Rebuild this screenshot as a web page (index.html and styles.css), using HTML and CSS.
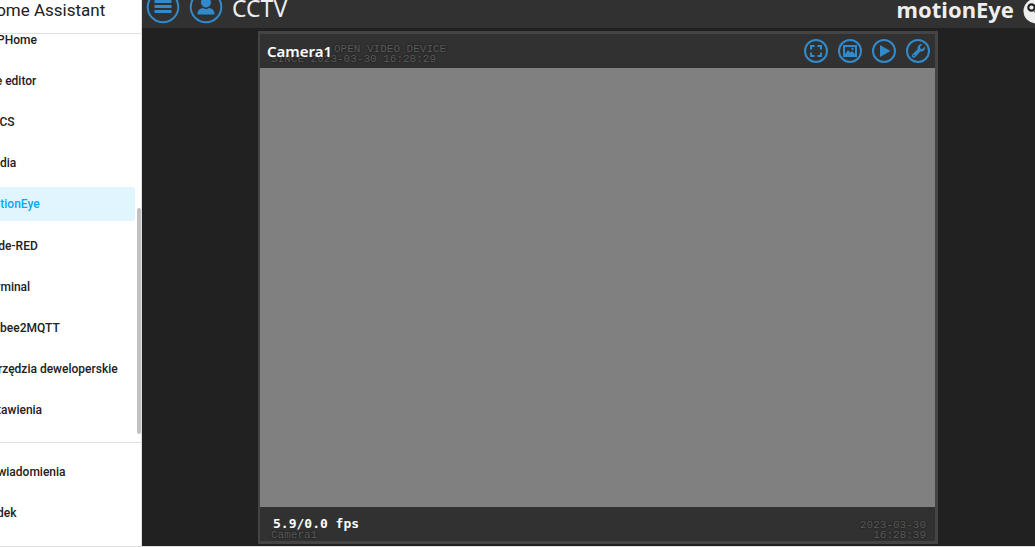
FILE: index.html
```
<!DOCTYPE html>
<html lang="pl">
<head>
    <meta charset="utf-8">
    <title>motionEye</title>
    <link rel="stylesheet" href="styles.css">
</head>
<body>

<nav class="sidebar">
    <div class="title">Home Assistant</div>
    <div class="menu">
        <a href="#">ESPHome</a>
        <a href="#">File editor</a>
        <a href="#">HACS</a>
        <a href="#">Media</a>
        <a href="#" class="active">MotionEye</a>
        <a href="#">Node-RED</a>
        <a href="#">Terminal</a>
        <a href="#">Zigbee2MQTT</a>
        <a href="#">Narzędzia deweloperskie</a>
        <a href="#">Ustawienia</a>
        <span class="scroll"></span>
    </div>
    <div class="bottom">
        <a href="#">Powiadomienia</a>
        <a href="#">Radek</a>
    </div>
</nav>

<main class="page">
    <header class="header">
        <button class="round" aria-label="Menu">
            <svg viewBox="0 0 34 34"><circle cx="17" cy="17" r="15.3"/><path class="fill" d="M8.500 10h17v3h-17zM8.500 15h17v3h-17zM8.500 20h17v3h-17z"/></svg>
        </button>
        <button class="round" aria-label="User">
            <svg viewBox="0 0 34 34"><circle cx="17" cy="17" r="15.3"/><path class="fill" d="M8.500 24.500c0-4 2-6 5.500-6.500q3 2 6 0c3.500.5 5.500 2.500 5.500 6.500z"/><circle class="fill" cx="17" cy="12.500" r="5"/></svg>
        </button>
        <span class="name">CCTV</span>
        <span class="logo">motionEye</span>
        <svg class="owl" viewBox="0 0 26 26"><circle cx="13" cy="13" r="12.500" fill="#eee"/><circle cx="8.500" cy="9.500" r="3.200" fill="#eee" stroke="#222" stroke-width="2.200"/><circle cx="18" cy="9.500" r="3.200" fill="#eee" stroke="#222" stroke-width="2.200"/><path d="M11 13l2 4 2-4z" fill="#222"/></svg>
    </header>

    <section class="camera">
        <div class="bar top">
            <div class="osd error"><span>OPEN VIDEO DEVICE</span>SINCE 2023-03-30 16:28:29</div>
            <h1>Camera1</h1>
            <div class="buttons">
                <button aria-label="Full screen"><svg viewBox="0 0 24 24"><circle cx="12" cy="12" r="11"/><path d="M7 10.500V7h3.500M13.500 7H17v3.500M17 13.500V17h-3.500M10.500 17H7v-3.500"/></svg></button>
                <button aria-label="Pictures"><svg viewBox="0 0 24 24"><circle cx="12" cy="12" r="11"/><path d="M6 7h12v10H6z"/><path class="fill" d="M7 15l3-4 2.500 2.500L14 12l3 3v1H7z"/><circle class="fill" cx="14.500" cy="9.800" r="1.200"/></svg></button>
                <button aria-label="Movies"><svg viewBox="0 0 24 24"><circle cx="12" cy="12" r="11"/><path class="fill" d="M8 6l10.500 6L8 18z"/></svg></button>
                <button aria-label="Settings"><svg viewBox="0 0 24 24"><circle cx="12" cy="12" r="11"/><path class="fill" fill-rule="evenodd" d="M16.500 5.200l-2.500 2.500.3 2 2 .3 2.500-2.500c.8 3-1.500 5.500-4.500 5l-5 5.500c-2 2-4.800-.8-2.800-2.800l5.200-5c-.7-3 1.800-5.700 4.800-5zM7.200 16.500a.8.8 0 1 0 1.600 0a.8.8 0 1 0-1.600 0z"/></svg></button>
            </div>
        </div>
        <div class="video"></div>
        <div class="bar foot">
            <div class="info">
                <div class="fps">5.9/0.0 fps</div>
                <div class="osd">Camera1</div>
            </div>
            <div class="osd date">2023-03-30<br>16:28:39</div>
        </div>
    </section>
</main>

</body>
</html>
```
FILE: styles.css
```
* {
    box-sizing: border-box;
}

body {
    margin: 0;
    height: 100vh;
    display: flex;
    overflow: hidden;
    background: #212121;
    border-bottom: 1px solid #ddd;
}

button {
    padding: 0;
    border: 0;
    background: none;
}

svg {
    display: block;
    width: 100%;
    height: 100%;
    fill: none;
    stroke: #328aca;
    stroke-width: 2;
}

svg .fill {
    fill: #328aca;
    stroke: none;
}

/* sidebar */
.sidebar {
    width: 142px;
    flex: none;
    display: flex;
    flex-direction: column;
    overflow: hidden;
    background: #fff;
    border-right: 1px solid #e0e0e0;
    font-family: Roboto, sans-serif;
}

.title {
    height: 34px;
    flex: none;
    border-bottom: 1px solid #e0e0e0;
    text-indent: -16px;
    font-size: 17px;
    line-height: 20px;
    white-space: nowrap;
    color: #212121;
}

.menu {
    position: relative;
    flex: 1;
    display: flex;
    flex-direction: column;
    justify-content: space-between;
    margin-top: -11px;
    padding-bottom: 15px;
}

.sidebar a {
    display: block;
    height: 34px;
    margin-right: 6px;
    border-radius: 0 3px 3px 0;
    text-indent: -17px;
    font-size: 12px;
    font-weight: 500;
    line-height: 34px;
    white-space: nowrap;
    color: #212121;
    text-decoration: none;
}

.sidebar a.active {
    background: #e1f5fe;
    color: #03a9f4;
}

.scroll {
    position: absolute;
    right: 0;
    bottom: 8px;
    width: 4px;
    height: 226px;
    border-radius: 2px;
    background: #c1c1c1;
}

.bottom {
    display: flex;
    flex-direction: column;
    gap: 7px;
    padding: 12px 0 16px;
    border-top: 1px solid #e0e0e0;
}

/* motionEye */
.page {
    flex: 1;
    min-width: 0;
    display: flex;
    flex-direction: column;
    overflow: hidden;
    font-family: "Noto Sans", sans-serif;
    color: #eee;
}

.header {
    height: 28px;
    display: flex;
    align-items: flex-end;
    padding: 0 0 4px 4px;
    background: #313131;
}

.round {
    width: 34px;
    height: 34px;
    flex: none;
    margin-right: 9px;
}

.name {
    font-size: 23px;
    line-height: 32px;
}

.logo {
    margin: 0 9px 0 auto;
    font-size: 22px;
    font-weight: 700;
    line-height: 30px;
}

.owl {
    width: 26px;
    height: 26px;
    flex: none;
    margin-right: -14px;
    stroke: none;
}

.camera {
    flex: 1;
    display: flex;
    flex-direction: column;
    margin: 3px 97px 2px 116px;
    border: 3px solid #444;
    border-left-width: 2px;
    background: #313131;
}

.bar {
    display: flex;
    flex: none;
}

.top {
    position: relative;
    height: 34px;
    align-items: center;
    padding: 0 5px 0 7px;
}

h1 {
    position: relative;
    margin: 0;
    font-size: 15px;
    font-weight: 600;
    line-height: 20px;
    color: #fff;
}

.osd {
    font-family: "Liberation Mono", monospace;
    font-size: 11px;
    line-height: 10px;
    color: #5a5a5a;
    text-shadow: 0 0 2px #111;
}

/* text drawn by the camera, runs under the title */
.error {
    position: absolute;
    left: 11px;
    top: 10px;
}

.error span {
    display: block;
    padding-left: 63px;
}

.buttons {
    display: flex;
    gap: 10px;
    margin-left: auto;
}

.buttons button {
    width: 24px;
    height: 24px;
}

.video {
    flex: 1;
    background: #808080;
}

.foot {
    height: 34px;
    justify-content: space-between;
    align-items: flex-end;
    padding: 0 9px 1px 11px;
}

.fps {
    padding-left: 2px;
    font: bold 13px/12px "DejaVu Sans Mono", monospace;
    color: #fff;
}

.date {
    text-align: right;
}
```
